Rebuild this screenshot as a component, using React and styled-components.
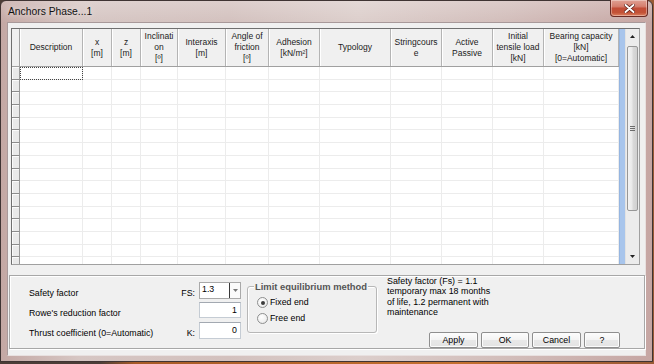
import React from 'react';
import styled, { createGlobalStyle } from 'styled-components';

const Global = createGlobalStyle`
  html, body { margin: 0; padding: 0; }
  body {
    width: 654px; height: 364px; overflow: hidden;
    background: linear-gradient(to right, #4b3d37 0px, #4b3d37 100px, #a75a26 135px, #c4702f 70%, #9a5a35 100%);
    font-family: "Liberation Sans", Arial, sans-serif;
  }
  #root { width: 654px; height: 364px; }
`;

const Window = styled.div`
  width: 653px; height: 362px; box-sizing: border-box;
  display: flex; flex-direction: column;
  border: 1px solid #3f3433;
  border-radius: 6px 6px 0 0;
  padding: 0 6px 5px 6px;
  background:
    linear-gradient(to bottom, rgba(255,255,255,0.22) 0px, rgba(255,255,255,0) 22px),
    linear-gradient(to right, #c4a8a4 0%, #d6c6c3 12%, #d3c1be 35%, #dccecb 55%, #d2bdba 78%, #c6a6a3 100%);
`;

const TitleBar = styled.div`
  height: 21px; display: flex; align-items: flex-start; justify-content: space-between;
`;

const Title = styled.span`
  font-size: 10.3px; line-height: 21px; color: #111; padding-left: 1px;
  text-shadow: 0 0 6px rgba(255,255,255,0.8);
`;

const CloseBtn = styled.div`
  width: 38px; height: 17px; box-sizing: border-box; margin-right: -2px; margin-top: -1px;
  border: 1px solid #6a2b24; border-top: none; border-radius: 0 0 4px 4px;
  background: linear-gradient(to bottom, #e0a093 0%, #d57f6f 40%, #c24c37 52%, #c25236 78%, #dc8060 100%);
  box-shadow: inset 0 0 0 1px rgba(255,255,255,0.35);
  display: flex; align-items: center; justify-content: center;
`;

const Client = styled.div`
  flex: 1; display: flex; flex-direction: column;
  border: 1px solid #9e8f8d;
  border-color: #a8999a #e8e0df #e8e0df #a8999a;
  background: #f0f0f0;
  padding: 5px 0 6px 1px;
`;

const Grid = styled.div`
  height: 237px; box-sizing: border-box; display: flex;
  margin: 0 5px 0 2px;
  border: 1px solid #a0a0a0;
  border-color: #6f6f6f #a0a0a0 #a0a0a0 #6f6f6f;
  background: #fff; overflow: hidden;
`;

const Table = styled.div`
  width: 607px; display: flex; flex-direction: column;
`;

const HeaderRow = styled.div`
  display: flex; height: 38px; box-sizing: border-box;
  border-bottom: 1px solid #a0a0a0; background: #f0f0f0; flex-shrink: 0;
`;

const Corner = styled.div`
  width: 8px; box-sizing: border-box; border-right: 1px solid #a0a0a0;
  background: #f0f0f0;
`;

const HeadCell = styled.div`
  width: ${p => p.$w}px; box-sizing: border-box; flex-shrink: 0;
  border-right: 1px solid #b4b4b4; box-shadow: inset 1px 0 0 #fff;
  display: flex; flex-direction: column; align-items: center; justify-content: center;
  font-size: 8.5px; line-height: 11px; color: #1b1b1b; text-align: center; white-space: nowrap;
`;

const Body = styled.div`
  flex: 1; overflow: hidden;
`;

const Row = styled.div`
  display: flex; height: 12.7px; box-sizing: border-box;
`;

const RowHead = styled.div`
  width: 8px; box-sizing: border-box; flex-shrink: 0;
  background: #e9e9e9;
  border-right: 1px solid #9a9a9a; border-bottom: 1px solid #8c8c8c;
  box-shadow: inset 1px 1px 0 #fbfbfb;
`;

const Cell = styled.div`
  width: ${p => p.$w}px; box-sizing: border-box; flex-shrink: 0;
  border-right: 1px solid #ececec; border-bottom: 1px solid #ececec;
  outline: ${p => (p.$focus ? '1px dotted #444' : 'none')};
  outline-offset: -1px;
`;

const BlueStrip = styled.div`
  width: 6px; background: #a8c5ec; border-left: 1px solid #95b5e0; box-sizing: border-box;
`;

const ScrollBar = styled.div`
  width: 14px; display: flex; flex-direction: column; align-items: center;
  background: #ececec; box-shadow: inset 1px 0 0 #e2e2e2;
`;

const Arrow = styled.div`
  height: 15px; width: 14px; display: flex; align-items: center; justify-content: center;
`;

const Thumb = styled.div`
  width: 11px; height: 165px; margin-top: 2px; box-sizing: border-box;
  border: 1px solid #979797; border-radius: 2px;
  background: linear-gradient(to right, #f3f3f3 0%, #e9e9e9 45%, #d9d9d9 55%, #d0d0d0 100%);
  display: flex; align-items: center; justify-content: center;
`;

const Spacer = styled.div`flex: 1;`;

const Panel = styled.div`
  flex: 1; margin: 10px 0 0 0; display: flex;
  border: 1px solid #a7a7a7;
  box-shadow: inset 1px 1px 0 #fff, 1px 1px 0 #fff;
  padding: 0 24px 0 19px;
  font-size: 8.8px; color: #000;
`;

const Fields = styled.div`
  width: 212px; padding-top: 6px;
  display: grid; grid-template-columns: 1fr auto 42px;
  grid-auto-rows: 17px; row-gap: 3px; column-gap: 4px;
  align-content: start;
`;

const Label = styled.span`
  align-self: end; line-height: 12px; white-space: nowrap;
  text-align: ${p => (p.$right ? 'right' : 'left')};
`;

const Combo = styled.div`
  display: flex; box-sizing: border-box; border: 1px solid #a9a9a9; background: #fff;
`;

const ComboText = styled.span`
  flex: 1; padding-left: 2px; line-height: 13px; font-size: 8.8px;
`;

const ComboBtn = styled.span`
  width: 10px; border-left: 1px solid #3a3a3a; display: flex; align-items: center; justify-content: center;
  background: #fafafa;
`;

const TextBox = styled.div`
  box-sizing: border-box; border: 1px solid #c5ccd4; border-top-color: #a3a9b1;
  background: #fff; text-align: right; padding-right: 3px; line-height: 14px;
  height: ${p => p.$h || 17}px;
`;

const GroupBox = styled.div`
  width: 130px; height: 47px; box-sizing: border-box; margin: 10px 0 0 6px;
  border: 1px solid #b7b7b7; border-radius: 3px;
  box-shadow: inset 1px 1px 0 #fff, 1px 1px 0 #fff;
  display: flex; flex-direction: column;
`;

const Legend = styled.span`
  margin: -6px 0 0 6px; padding: 0 1px; width: fit-content;
  background: #f0f0f0; font-weight: bold; font-size: 9.4px; line-height: 11px; color: #555;
`;

const RadioList = styled.div`
  display: flex; flex-direction: column; gap: 3px; padding: 4px 0 0 9px;
`;

const RadioRow = styled.label`
  display: flex; align-items: center; gap: 2px; height: 13px; line-height: 13px;
`;

const RadioDot = styled.span`
  width: 11px; height: 11px; box-sizing: border-box; border-radius: 50%;
  border: 1px solid #8e8f8f;
  background: radial-gradient(circle at 40% 35%, #ffffff 0%, #f0f0f0 60%, #d8d8d8 100%);
  display: flex; align-items: center; justify-content: center;
  &::after {
    content: ''; width: 4px; height: 4px; border-radius: 50%;
    background: ${p => (p.$on ? '#3b3b3b' : 'transparent')};
  }
`;

const Side = styled.div`
  flex: 1; margin-left: 10px; display: flex; flex-direction: column; justify-content: space-between;
`;

const Info = styled.div`
  font-size: 8.9px; line-height: 10.4px; padding-top: 0px; white-space: nowrap;
`;

const Buttons = styled.div`
  display: flex; justify-content: flex-end; gap: 3px;
`;

const Button = styled.div`
  width: ${p => p.$w}px; height: 16px; box-sizing: border-box;
  border: 1px solid #8f8f8f; border-radius: 2px;
  background: linear-gradient(to bottom, #fdfdfd 0%, #f3f3f3 50%, #e8e8e8 52%, #e3e3e3 100%);
  box-shadow: inset 0 0 0 1px #fcfcfc;
  display: flex; align-items: center; justify-content: center;
  font-size: 8.8px; color: #000;
`;

const columns = [
  { w: 63, lines: ['Description'] },
  { w: 29, lines: ['x', '[m]'] },
  { w: 29, lines: ['z', '[m]'] },
  { w: 37, lines: ['Inclinati', 'on', '[º]'] },
  { w: 48, lines: ['Interaxis', '[m]'] },
  { w: 43, lines: ['Angle of', 'friction', '[º]'] },
  { w: 51, lines: ['Adhesion', '[kN/m²]'] },
  { w: 71, lines: ['Typology'] },
  { w: 51, lines: ['Stringcours', 'e'] },
  { w: 51, lines: ['Active', 'Passive'] },
  { w: 51, lines: ['Initial', 'tensile load', '[kN]'] },
  { w: 75, lines: ['Bearing capacity', '[kN]', '[0=Automatic]'] },
];

const rows = Array.from({ length: 16 }, (_, i) => i);

export default function App() {
  return (
    <>
      <Global />
      <Window>
        <TitleBar>
          <Title>Anchors Phase...1</Title>
          <CloseBtn>
            <svg width="11" height="9" viewBox="0 0 11 9">
              <path d="M1.5 1 L9.5 8 M9.5 1 L1.5 8" stroke="#5a1d16" strokeWidth="3.4" strokeLinecap="round" />
              <path d="M1.5 1 L9.5 8 M9.5 1 L1.5 8" stroke="#ffffff" strokeWidth="1.9" strokeLinecap="round" />
            </svg>
          </CloseBtn>
        </TitleBar>
        <Client>
          <Grid>
            <Table>
              <HeaderRow>
                <Corner />
                {columns.map((c, i) => (
                  <HeadCell key={i} $w={c.w}>
                    {c.lines.map((l, j) => (
                      <span key={j}>{l}</span>
                    ))}
                  </HeadCell>
                ))}
              </HeaderRow>
              <Body>
                {rows.map(r => (
                  <Row key={r}>
                    <RowHead />
                    {columns.map((c, i) => (
                      <Cell key={i} $w={c.w} $focus={r === 0 && i === 0} />
                    ))}
                  </Row>
                ))}
              </Body>
            </Table>
            <BlueStrip />
            <ScrollBar>
              <Arrow>
                <svg width="5" height="3" viewBox="0 0 5 3"><path d="M0 3 L2.5 0 L5 3 Z" fill="#222" /></svg>
              </Arrow>
              <Thumb>
                <svg width="5" height="5" viewBox="0 0 5 5">
                  <path d="M0 0.5 H5 M0 2.5 H5 M0 4.5 H5" stroke="#6c6c6c" strokeWidth="1" />
                </svg>
              </Thumb>
              <Spacer />
              <Arrow>
                <svg width="5" height="3" viewBox="0 0 5 3"><path d="M0 0 L2.5 3 L5 0 Z" fill="#222" /></svg>
              </Arrow>
            </ScrollBar>
          </Grid>
          <Panel>
            <Fields>
              <Label>Safety factor</Label>
              <Label $right>FS:</Label>
              <Combo>
                <ComboText>1.3</ComboText>
                <ComboBtn>
                  <svg width="5" height="3" viewBox="0 0 5 3"><path d="M0 0 L2.5 3 L5 0 Z" fill="#777" /></svg>
                </ComboBtn>
              </Combo>
              <Label>Rowe's reduction factor</Label>
              <Label $right></Label>
              <TextBox $h={16}>1</TextBox>
              <Label>Thrust coefficient (0=Automatic)</Label>
              <Label $right>K:</Label>
              <TextBox>0</TextBox>
            </Fields>
            <GroupBox>
              <Legend>Limit equilibrium method</Legend>
              <RadioList>
                <RadioRow><RadioDot $on />Fixed end</RadioRow>
                <RadioRow><RadioDot />Free end</RadioRow>
              </RadioList>
            </GroupBox>
            <Side>
              <Info>
                Safety factor (Fs) = 1.1<br />
                temporary max 18 months<br />
                of life, 1.2 permanent with<br />
                maintenance
              </Info>
              <Buttons>
                <Button $w={49}>Apply</Button>
                <Button $w={48}>OK</Button>
                <Button $w={49}>Cancel</Button>
                <Button $w={36}>?</Button>
              </Buttons>
            </Side>
          </Panel>
        </Client>
      </Window>
    </>
  );
}
